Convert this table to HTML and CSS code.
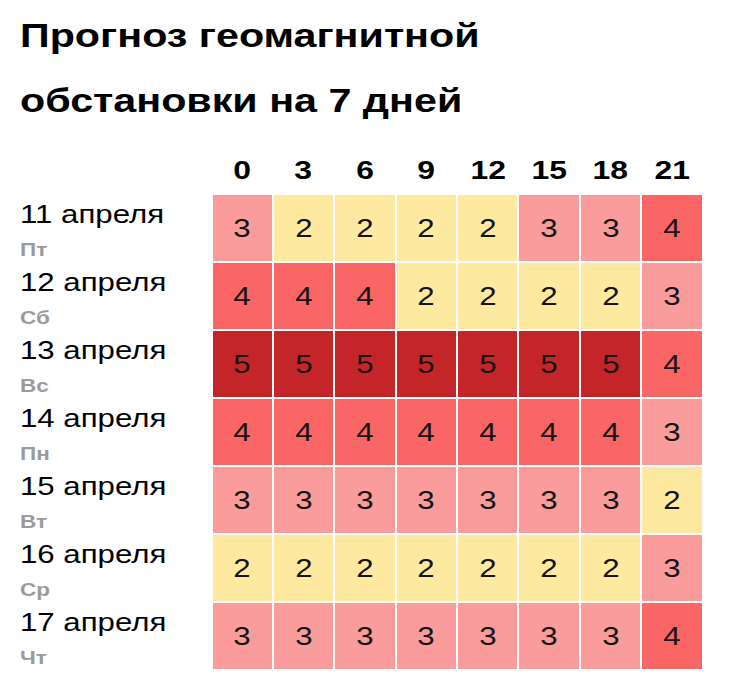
FILE: index.html
```html
<!DOCTYPE html>
<html lang="ru">
<head>
<meta charset="utf-8">
<title>Прогноз геомагнитной обстановки на 7 дней</title>
<link rel="stylesheet" href="styles.css">
</head>
<body>
<h1 class="title"><span class="wide">Прогноз геомагнитной<br>обстановки на 7 дней</span></h1>
<div class="grid">
  <div class="corner"></div>
  <div class="hour"><span class="wide-c">0</span></div><div class="hour"><span class="wide-c">3</span></div><div class="hour"><span class="wide-c">6</span></div><div class="hour"><span class="wide-c">9</span></div><div class="hour"><span class="wide-c">12</span></div><div class="hour"><span class="wide-c">15</span></div><div class="hour"><span class="wide-c">18</span></div><div class="hour"><span class="wide-c">21</span></div>

  <div class="label"><div class="date"><span class="wide-d">11 апреля</span></div><div class="day"><span class="wide">Пт</span></div></div>
  <div class="cell k3"><span class="wide-c">3</span></div><div class="cell k2"><span class="wide-c">2</span></div><div class="cell k2"><span class="wide-c">2</span></div><div class="cell k2"><span class="wide-c">2</span></div><div class="cell k2"><span class="wide-c">2</span></div><div class="cell k3"><span class="wide-c">3</span></div><div class="cell k3"><span class="wide-c">3</span></div><div class="cell k4"><span class="wide-c">4</span></div>

  <div class="label"><div class="date"><span class="wide-d">12 апреля</span></div><div class="day"><span class="wide">Сб</span></div></div>
  <div class="cell k4"><span class="wide-c">4</span></div><div class="cell k4"><span class="wide-c">4</span></div><div class="cell k4"><span class="wide-c">4</span></div><div class="cell k2"><span class="wide-c">2</span></div><div class="cell k2"><span class="wide-c">2</span></div><div class="cell k2"><span class="wide-c">2</span></div><div class="cell k2"><span class="wide-c">2</span></div><div class="cell k3"><span class="wide-c">3</span></div>

  <div class="label"><div class="date"><span class="wide-d">13 апреля</span></div><div class="day"><span class="wide">Вс</span></div></div>
  <div class="cell k5"><span class="wide-c">5</span></div><div class="cell k5"><span class="wide-c">5</span></div><div class="cell k5"><span class="wide-c">5</span></div><div class="cell k5"><span class="wide-c">5</span></div><div class="cell k5"><span class="wide-c">5</span></div><div class="cell k5"><span class="wide-c">5</span></div><div class="cell k5"><span class="wide-c">5</span></div><div class="cell k4"><span class="wide-c">4</span></div>

  <div class="label"><div class="date"><span class="wide-d">14 апреля</span></div><div class="day"><span class="wide">Пн</span></div></div>
  <div class="cell k4"><span class="wide-c">4</span></div><div class="cell k4"><span class="wide-c">4</span></div><div class="cell k4"><span class="wide-c">4</span></div><div class="cell k4"><span class="wide-c">4</span></div><div class="cell k4"><span class="wide-c">4</span></div><div class="cell k4"><span class="wide-c">4</span></div><div class="cell k4"><span class="wide-c">4</span></div><div class="cell k3"><span class="wide-c">3</span></div>

  <div class="label"><div class="date"><span class="wide-d">15 апреля</span></div><div class="day"><span class="wide">Вт</span></div></div>
  <div class="cell k3"><span class="wide-c">3</span></div><div class="cell k3"><span class="wide-c">3</span></div><div class="cell k3"><span class="wide-c">3</span></div><div class="cell k3"><span class="wide-c">3</span></div><div class="cell k3"><span class="wide-c">3</span></div><div class="cell k3"><span class="wide-c">3</span></div><div class="cell k3"><span class="wide-c">3</span></div><div class="cell k2"><span class="wide-c">2</span></div>

  <div class="label"><div class="date"><span class="wide-d">16 апреля</span></div><div class="day"><span class="wide">Ср</span></div></div>
  <div class="cell k2"><span class="wide-c">2</span></div><div class="cell k2"><span class="wide-c">2</span></div><div class="cell k2"><span class="wide-c">2</span></div><div class="cell k2"><span class="wide-c">2</span></div><div class="cell k2"><span class="wide-c">2</span></div><div class="cell k2"><span class="wide-c">2</span></div><div class="cell k2"><span class="wide-c">2</span></div><div class="cell k3"><span class="wide-c">3</span></div>

  <div class="label"><div class="date"><span class="wide-d">17 апреля</span></div><div class="day"><span class="wide">Чт</span></div></div>
  <div class="cell k3"><span class="wide-c">3</span></div><div class="cell k3"><span class="wide-c">3</span></div><div class="cell k3"><span class="wide-c">3</span></div><div class="cell k3"><span class="wide-c">3</span></div><div class="cell k3"><span class="wide-c">3</span></div><div class="cell k3"><span class="wide-c">3</span></div><div class="cell k3"><span class="wide-c">3</span></div><div class="cell k4"><span class="wide-c">4</span></div>
</div>
</body>
</html>
```
FILE: styles.css
```css
html, body {
  margin: 0;
  padding: 0;
  background: #fff;
}
body {
  padding: 4px 0 0 20px;
  font-family: "Liberation Sans", Arial, sans-serif;
  color: #000;
}
.wide {
  display: inline-block;
  transform: scaleX(1.25);
  transform-origin: left top;
  white-space: nowrap;
}
.wide-d {
  display: inline-block;
  transform: scaleX(1.2);
  transform-origin: left top;
  white-space: nowrap;
}
.wide-c {
  display: inline-block;
  transform: scaleX(1.25);
  transform-origin: center;
  white-space: nowrap;
}
.title {
  margin: 0;
  font-size: 33px;
  font-weight: bold;
  line-height: 64.5px;
}
.grid {
  display: grid;
  grid-template-columns: 190.5px repeat(8, 59.4px);
  grid-template-rows: 38px repeat(7, 66px);
  column-gap: 2px;
  row-gap: 2px;
  margin-top: 22px;
}
.hour {
  font-size: 25.5px;
  font-weight: bold;
  line-height: 30px;
  text-align: center;
}
.label {
  padding-top: 2px;
  height: 66px;
  box-sizing: border-box;
}
.date {
  font-size: 26px;
  line-height: 34px;
  white-space: nowrap;
}
.day {
  font-size: 18px;
  font-weight: bold;
  line-height: 22px;
  margin-top: 8px;
  color: #9b9b9b;
}
.cell {
  display: flex;
  align-items: center;
  justify-content: center;
  font-size: 25px;
  color: #151515;
}
.k2 { background: #fde99f; }
.k3 { background: #fa9c9c; }
.k4 { background: #fa6565; }
.k5 { background: #c32528; }
```
